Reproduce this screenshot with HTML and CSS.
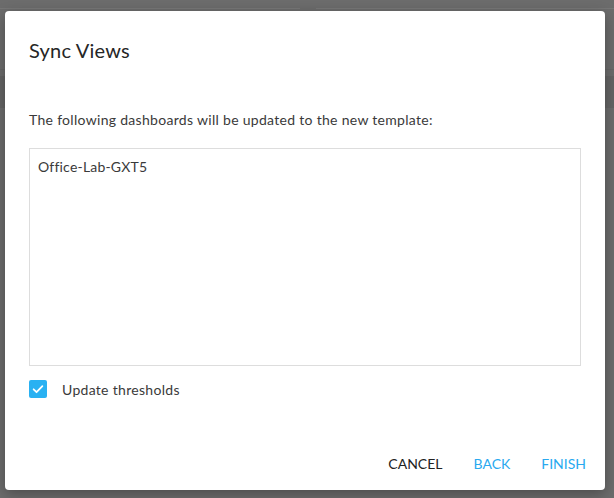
FILE: index.html
```html
<!DOCTYPE html>
<html lang="en">
<head>
    <meta charset="UTF-8">
    <title>Sync Views</title>
    <meta name="viewport" content="width=device-width, initial-scale=1">
    <link rel="stylesheet" href="styles.css">
</head>
<body>
    <div class="backdrop">
        <div class="bg-card bg-card-a"></div>
        <div class="bg-card bg-card-b"></div>
        <div class="bg-band"></div>
    </div>
    <div class="dialog">
        <h2 class="dialog-title">Sync Views</h2>
        <div class="dialog-body">
            <p class="intro">The following dashboards will be updated to the new template:</p>
            <div class="dash-list">
                <div class="dash-item">Office-Lab-GXT5</div>
            </div>
            <label class="check-row">
                <span class="checkbox">
                    <svg width="14" height="14" viewBox="0 0 24 24"><path d="M4.5 12.5l5 5L19.5 7" fill="none" stroke="#fff" stroke-width="3" stroke-linecap="round" stroke-linejoin="round"/></svg>
                </span>
                <span>Update thresholds</span>
            </label>
        </div>
        <div class="dialog-actions">
            <button class="btn">CANCEL</button>
            <button class="btn btn-primary">BACK</button>
            <button class="btn btn-primary">FINISH</button>
        </div>
    </div>
</body>
</html>
```

FILE: styles.css
```css
html, body { margin: 0; height: 100%; }
body { font-family: Lato, "Open Sans", sans-serif; background: #6c6c6c; color: #3a3a3a; overflow: hidden; position: relative; }
.backdrop { position: absolute; inset: 0; }
.bg-card { position: absolute; top: 8px; height: 60px; border-top: 1px solid #777; border-bottom: 1px solid #666; }
.bg-card-a { left: 0; width: 300px; }
.bg-card-b { left: 316px; width: 298px; }
.bg-band { position: absolute; left: 0; right: 0; top: 76px; height: 32px; background: #646464; }
.dialog { position: absolute; left: 5px; top: 11px; width: 600px; height: 479px; background: #fff; border-radius: 4px; box-shadow: 0 4px 14px rgba(0,0,0,0.3); display: flex; flex-direction: column; }
.dialog-title { margin: 0; padding: 27px 24px 0; font-size: 20px; font-weight: 400; color: #262626; line-height: 24px; letter-spacing: 0.2px; }
.dialog-body { padding: 48px 24px 0; flex: 1; }
.intro { margin: 0; font-size: 14px; line-height: 20px; letter-spacing: 0.3px; }
.dash-list { margin-top: 18px; height: 218px; box-sizing: border-box; border: 1px solid #ddd; padding: 8px; }
.dash-item { font-size: 14px; line-height: 20px; letter-spacing: 0.2px; }
.check-row { display: flex; align-items: center; gap: 15px; margin-top: 14px; font-size: 14px; letter-spacing: 0.3px; }
.checkbox { width: 18px; height: 18px; border-radius: 2px; background: #29b1f2; display: flex; align-items: center; justify-content: center; }
.dialog-actions { display: flex; justify-content: flex-end; gap: 11px; padding: 0 9px 10px; }
.btn { background: none; border: none; font-family: inherit; font-size: 14px; color: #222; padding: 8px 10px; cursor: pointer; }
.btn-primary { color: #29a9ef; }
```
